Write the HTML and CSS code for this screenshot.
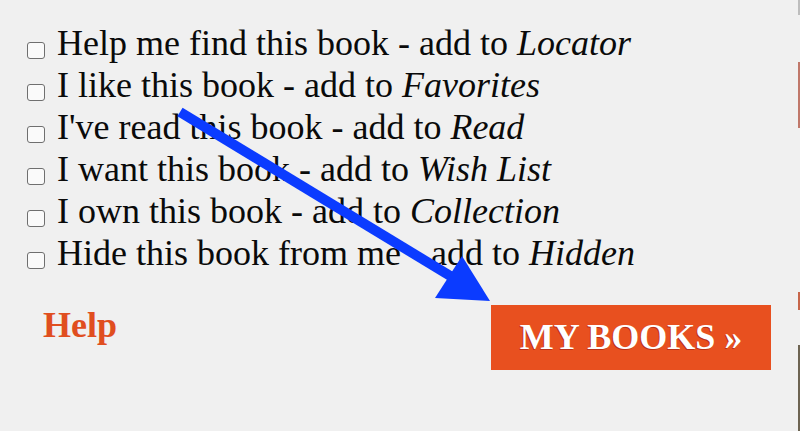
FILE: index.html
```html
<!DOCTYPE html>
<html lang="en">
<head>
  <meta charset="UTF-8">
  <meta name="viewport" content="width=device-width, initial-scale=1.0">
  <title>My Books</title>
  <link rel="stylesheet" href="styles.css">
</head>
<body>
  <div class="panel">
    <ul class="options">
      <li><input type="checkbox" id="opt1"><label for="opt1">Help me find this book - add to <em>Locator</em></label></li>
      <li><input type="checkbox" id="opt2"><label for="opt2">I like this book - add to <em>Favorites</em></label></li>
      <li><input type="checkbox" id="opt3"><label for="opt3">I've read this book - add to <em>Read</em></label></li>
      <li><input type="checkbox" id="opt4"><label for="opt4">I want this book - add to <em>Wish List</em></label></li>
      <li><input type="checkbox" id="opt5"><label for="opt5">I own this book - add to <em>Collection</em></label></li>
      <li><input type="checkbox" id="opt6"><label for="opt6">Hide this book from me - add to <em>Hidden</em></label></li>
    </ul>
    <div class="actions">
      <a class="help-link" href="#">Help</a>
      <a class="my-books" href="#">MY BOOKS &raquo;</a>
    </div>
  </div>

  <!-- annotation arrow drawn on top of the screenshot -->
  <svg class="arrow" width="800" height="431" viewBox="0 0 800 431">
    <line x1="180" y1="112" x2="452" y2="277" stroke="#0b3bff" stroke-width="10" stroke-linecap="butt"/>
    <polygon points="490,301 435,298 462,256" fill="#0b3bff"/>
  </svg>
  <div class="edge"></div>
</body>
</html>
```

FILE: styles.css
```css
body {
  margin: 0;
  padding: 0;
  background-color: #f0f0f0;
  font-family: "Liberation Serif", "Times New Roman", serif;
  color: #0a0a0a;
}

.panel {
  padding: 22px 29px 0 27px;
}

.options {
  list-style: none;
  margin: 0;
  padding: 0;
}

.options li {
  font-size: 36px;
  line-height: 42px;
  white-space: nowrap;
}

.options input {
  appearance: none;
  -webkit-appearance: none;
  width: 18px;
  height: 17px;
  margin: 0 12px 0 0;
  vertical-align: -4px;
  background-color: #fafafa;
  border: 1px solid #6f6f6f;
  border-radius: 3px;
  box-sizing: border-box;
}

.options em {
  font-style: italic;
}

.actions {
  display: flex;
  justify-content: space-between;
  align-items: flex-start;
  margin-top: 31px;
}

.help-link {
  margin-left: 16px;
  font-size: 36px;
  line-height: 41px;
  font-weight: bold;
  color: #e04e1f;
  text-decoration: none;
}

.my-books {
  display: block;
  width: 280px;
  height: 65px;
  line-height: 65px;
  text-align: center;
  background-color: #e8501f;
  color: #fff;
  font-size: 36px;
  font-weight: bold;
  text-decoration: none;
  text-shadow: -1px 1px 0 #b8321a;
}

.arrow {
  position: absolute;
  top: 0;
  left: 0;
}

.edge {
  position: absolute;
  top: 0;
  right: 0;
  width: 2px;
  height: 431px;
  background: linear-gradient(#bdbdbd 0, #bdbdbd 15px, #f0f0f0 15px, #f0f0f0 62px,
    #c0786a 62px, #c0786a 128px, #f0f0f0 128px, #f0f0f0 292px,
    #c7664a 292px, #c7664a 310px, #f0f0f0 310px, #f0f0f0 345px, #6d6452 345px);
}
```
